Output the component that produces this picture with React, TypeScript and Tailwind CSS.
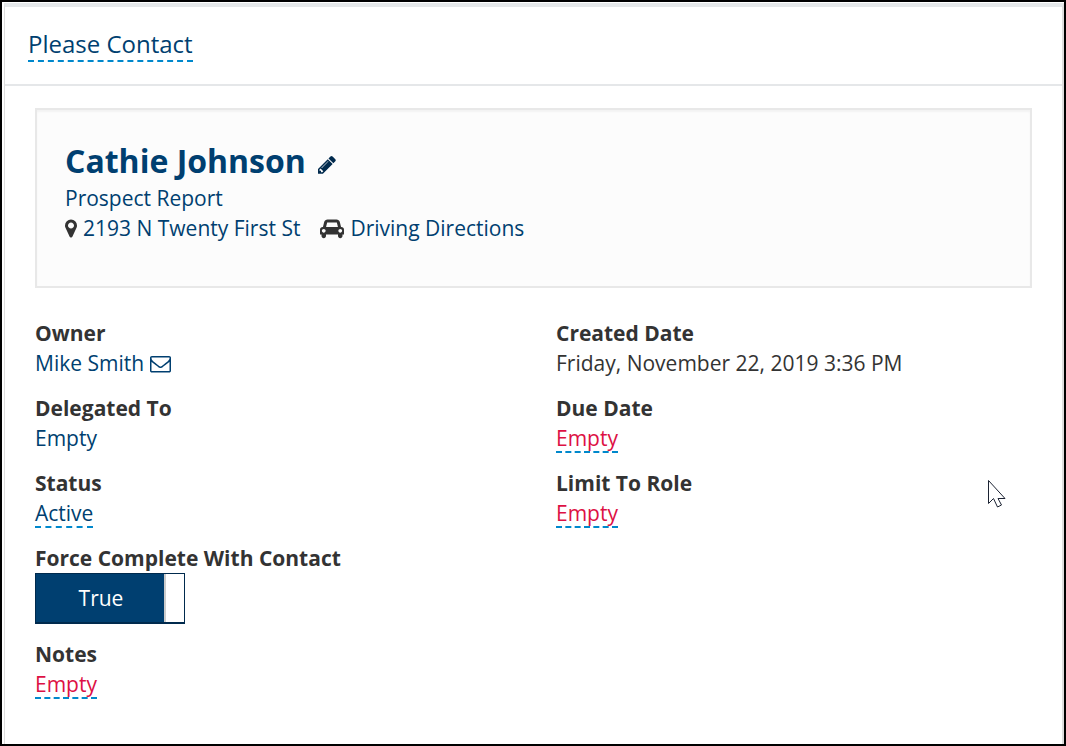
import { useState } from 'react';

const ICONS = {
    pencil: {
        viewBox: '128 149 1536 1536',
        d: 'M491 1536l91-91-235-235-91 91v107h128v128h107zm523-928q0-22-22-22-10 0-17 7l-542 542q-7 7-7 17 0 22 22 22 10 0 17-7l542-542q7-7 7-17zm-54-192l416 416-832 832h-416v-416zm683 96q0 53-37 90l-166 166-416-416 166-165q36-38 90-38 53 0 91 38l235 234q37 39 37 91z',
    },
    marker: {
        viewBox: '384 0 1024 1792',
        d: 'M1152 640q0-106-75-181t-181-75-181 75-75 181 75 181 181 75 181-75 75-181zm256 0q0 109-33 179l-364 774q-16 33-47.5 52t-67.5 19-67.5-19-46.5-52l-365-774q-33-70-33-179 0-212 150-362t362-150 362 150 150 362z',
    },
    car: {
        viewBox: '0 0 2048 1792',
        d: 'M480 1088q0-66-47-113t-113-47-113 47-47 113 47 113 113 47 113-47 47-113zm36-320h1016l-89-357q-2-8-14-17.5t-21-9.5h-768q-9 0-21 9.5t-14 17.5zm1372 320q0-66-47-113t-113-47-113 47-47 113 47 113 113 47 113-47 47-113zm160-96v384q0 14-9 23t-23 9h-96v128q0 80-56 136t-136 56-136-56-56-136v-128h-1024v128q0 80-56 136t-136 56-136-56-56-136v-128h-96q-14 0-23-9t-9-23v-384q0-93 65.5-158.5t158.5-65.5h28l105-419q23-94 104-157.5t179-63.5h768q98 0 179 63.5t104 157.5l105 419h28q93 0 158.5 65.5t65.5 158.5z',
    },
    envelope: {
        viewBox: '0 0 1792 1792',
        d: 'M1664 1504v-768q-32 36-69 66-268 206-426 338-51 43-83 67t-86.5 48.5-102.5 24.5h-2q-48 0-102.5-24.5t-86.5-48.5-83-67q-158-132-426-338-37-30-69-66v768q0 13 9.5 22.5t22.5 9.5h1472q13 0 22.5-9.5t9.5-22.5zm0-1051v-24.5l-.5-13-3-12.5-5.5-9-9-7.5-14-2.5h-1472q-13 0-22.5 9.5t-9.5 22.5q0 168 147 284 193 152 401 317 6 5 35 29.5t46 37.5 44.5 31.5 50.5 27.5 43 9h2q20 0 43-9t50.5-27.5 44.5-31.5 46-37.5 35-29.5q208-165 401-317 54-43 100.5-115.5t46.5-131.5zm128-37v1088q0 66-47 113t-113 47h-1472q-66 0-113-47t-47-113v-1088q0-66 47-113t113-47h1472q66 0 113 47t47 113z',
    },
};

function Icon({ name, className }: { name: keyof typeof ICONS; className: string }) {
    return (
        <svg viewBox={ICONS[name].viewBox} className={className} fill="currentColor" aria-hidden="true">
            <path d={ICONS[name].d} />
        </svg>
    );
}

function Editable({ value, empty }: { value: string; empty?: boolean }) {
    return (
        <button
            type="button"
            className={`block cursor-pointer border-b-2 border-dashed border-[#0088cc] pt-[2px] leading-[26px] ${empty ? 'text-[#dd1144]' : 'text-[#003f70]'}`}
        >
            {value}
        </button>
    );
}

function Field({ label, children }: { label: string; children: React.ReactNode }) {
    return (
        <div>
            <dt className="font-bold">{label}</dt>
            <dd>{children}</dd>
        </div>
    );
}

export default function App() {
    const [force, setForce] = useState(true);

    return (
        <div className="flex min-h-screen flex-col border-2 border-black bg-white pl-[2px] pt-px font-['Open_Sans',sans-serif] text-[21px] leading-[30px] text-[#333333]">
            <main className="flex-1 border-l border-r-2 border-t-4 border-l-[#dddddd] border-r-[#dddddd] border-t-[#e5e8ea]">
                <header className="flex border-b-2 border-[#e5e7e9] px-[23px] py-[22px]">
                    <h1>
                        <button type="button" className="block cursor-pointer border-b-2 border-dashed border-[#0088cc] pb-px text-[24px] leading-[30px] text-[#003f70]">
                            Please Contact
                        </button>
                    </h1>
                </header>

                <div className="px-[30px] pb-8 pt-[22px]">
                    {/* Contact card */}
                    <section className="border-2 border-[#e8e8e8] bg-[#fcfcfc] px-7 pb-[43px] pt-[30px] text-[#003f70] shadow-[inset_0_2px_2px_rgba(0,0,0,0.04)]">
                        <div className="flex items-center gap-3 pb-px">
                            <h2 className="text-[32px] font-bold leading-[42px]">Cathie Johnson</h2>
                            <button type="button" aria-label="Edit contact" className="cursor-pointer pt-2 text-[#002a4d]">
                                <Icon name="pencil" className="size-[18px]" />
                            </button>
                        </div>
                        <a href="#report" className="block">Prospect Report</a>
                        <div className="flex flex-wrap gap-x-5">
                            <span className="flex items-center gap-[6px]">
                                <Icon name="marker" className="h-[21px] w-3 text-[#333333]" />
                                <a href="#map">2193 N Twenty First St</a>
                            </span>
                            <span className="flex items-center gap-[6px]">
                                <Icon name="car" className="h-[21px] w-6 text-[#333333]" />
                                <a href="#directions">Driving Directions</a>
                            </span>
                        </div>
                    </section>

                    {/* Details */}
                    <div className="grid grid-cols-2 gap-x-[45px] pt-[30px]">
                        <dl className="flex flex-col gap-[15px]">
                            <Field label="Owner">
                                <a href="#owner" className="inline-flex items-center gap-[6px] text-[#003f70]">
                                    Mike Smith
                                    <Icon name="envelope" className="size-[21px]" />
                                </a>
                            </Field>
                            <Field label="Delegated To">
                                <span className="text-[#003f70]">Empty</span>
                            </Field>
                            <Field label="Status">
                                <Editable value="Active" />
                            </Field>
                            <Field label="Force Complete With Contact">
                                <label className="flex h-[51px] w-[150px] cursor-pointer border border-b-2 border-[#002a4d] bg-white">
                                    <input
                                        type="checkbox"
                                        className="sr-only"
                                        aria-label="Force Complete With Contact"
                                        checked={force}
                                        onChange={(e) => setForce(e.target.checked)}
                                    />
                                    {!force && <span className="w-5 border-r-2 border-[#cccccc]" />}
                                    <span className={`flex flex-1 items-center justify-center pl-[2px] ${force ? 'bg-[#003f70] text-white' : 'bg-[#eeeeee]'}`}>
                                        {force ? 'True' : 'False'}
                                    </span>
                                    {force && <span className="w-5 border-l-2 border-[#cccccc]" />}
                                </label>
                            </Field>
                            <Field label="Notes">
                                <Editable value="Empty" empty />
                            </Field>
                        </dl>

                        <dl className="flex flex-col gap-[15px]">
                            <Field label="Created Date">Friday, November 22, 2019 3:36 PM</Field>
                            <Field label="Due Date">
                                <Editable value="Empty" empty />
                            </Field>
                            <Field label="Limit To Role">
                                <Editable value="Empty" empty />
                            </Field>
                        </dl>
                    </div>
                </div>
            </main>

            {/* Mouse pointer */}
            <svg viewBox="0 0 18 28" className="pointer-events-none absolute left-[988px] top-[480px] h-7 w-[18px]" aria-hidden="true">
                <path d="M.5.5v23l5-5 4 8.500 4-2-3.500-6.500h7z" fill="#ffffff" stroke="#1c2333" />
            </svg>
        </div>
    );
}
